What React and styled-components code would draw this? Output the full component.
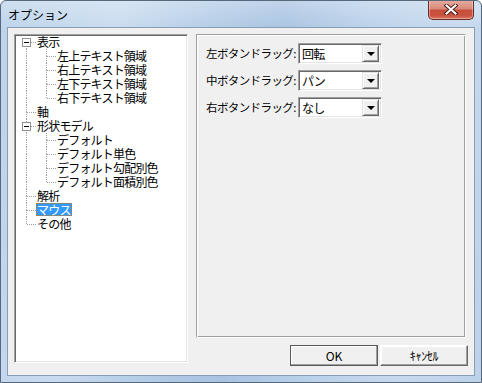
import React from 'react';
import styled, { createGlobalStyle } from 'styled-components';

const Global = createGlobalStyle`
  html, body { margin: 0; padding: 0; background: #ffffff; }
  body {
    font-family: "Noto Sans CJK JP", "Noto Sans", sans-serif;
    font-size: 12px;
    color: #000;
  }
  * { box-sizing: border-box; }
`;

const Window = styled.div`
  width: 482px;
  height: 383px;
  border: 1px solid #56687c;
  border-radius: 6px 6px 0 0;
  background:
    linear-gradient(to bottom, rgba(255,255,255,0.28), rgba(255,255,255,0) 30px),
    linear-gradient(100deg, #bcd3eb 0%, #c8dbef 22%, #b2cbe6 40%, #a8c3e2 52%, #bad1ea 68%, #c6d9ee 85%, #bcd2ea 100%);
  display: flex;
  flex-direction: column;
  overflow: hidden;
`;

const TitleBar = styled.div`
  height: 29px;
  display: flex;
  align-items: flex-start;
  padding: 0 7px 0 7px;
`;

const Title = styled.div`
  font-size: 12px;
  line-height: 14px;
  margin-top: 7px;
  color: #000;
`;

const CloseButton = styled.div`
  margin-left: auto;
  margin-top: -1px;
  width: 46px;
  height: 20px;
  border: 1px solid #6a2c26;
  border-top: none;
  border-radius: 0 0 5px 5px;
  background: linear-gradient(to bottom, #e6ada1 0%, #d98a7b 45%, #c84f3c 55%, #c9503e 80%, #d9785f 100%);
  box-shadow: inset 0 0 0 1px rgba(255,255,255,0.35);
  display: flex;
  align-items: center;
  justify-content: center;
`;

const Client = styled.div`
  flex: 1;
  margin: 0 6px 6px 6px;
  border: 1px solid #8a9db3;
  background: #f0f0f0;
  padding: 6px 8px 9px 6px;
  display: grid;
  grid-template-columns: 174px 1fr;
  column-gap: 8px;
`;

const TreeBox = styled.div`
  height: 329px;
  background: #ffffff;
  border: 1px solid;
  border-color: #a0a0a0 #ffffff #ffffff #a0a0a0;
  box-shadow: inset 1px 1px 0 #696969, inset -1px -1px 0 #e3e3e3;
  padding: 0 0 0 1px;
`;

const Row = styled.div`
  display: flex;
  height: 14px;
  align-items: flex-start;
`;

const dotV = 'repeating-linear-gradient(to bottom, #a0a0a0 0 1px, transparent 1px 2px)';
const dotH = 'repeating-linear-gradient(to right, #a0a0a0 0 1px, transparent 1px 2px)';

const Guide = styled.div`
  width: 20px;
  height: 14px;
  flex: none;
  display: flex;
  align-items: flex-start;
  background-repeat: no-repeat;
  background-image: ${p => [
    p.$up ? dotV : null,
    p.$down ? dotV : null,
    p.$branch ? dotH : null,
  ].filter(Boolean).join(', ') || 'none'};
  background-position: ${p => [
    p.$up ? '10px 0' : null,
    p.$down ? '10px 7px' : null,
    p.$branch ? '11px 7px' : null,
  ].filter(Boolean).join(', ') || '0 0'};
  background-size: ${p => [
    p.$up ? '1px 7px' : null,
    p.$down ? '1px 7px' : null,
    p.$branch ? '9px 1px' : null,
  ].filter(Boolean).join(', ') || 'auto'};
`;

const Expander = styled.span`
  width: 9px;
  height: 9px;
  margin: 3px 0 0 6px;
  border: 1px solid #919191;
  background: linear-gradient(#000, #000) center / 5px 1px no-repeat, #ffffff;
`;

const Label = styled.span`
  display: block;
  height: 13px;
  line-height: 13px;
  font-size: 12px;
  padding: 0 1px;
  white-space: nowrap;
  letter-spacing: -0.8px;
  color: ${p => (p.$selected ? '#ffffff' : '#000000')};
  background: ${p => (p.$selected ? '#3399ff' : 'transparent')};
  outline: ${p => (p.$selected ? '1px dotted #cc7a00' : 'none')};
  outline-offset: -1px;
`;

const RightCol = styled.div`
  display: flex;
  flex-direction: column;
`;

const Panel = styled.div`
  height: 304px;
  border: 1px solid;
  border-color: #a0a0a0 #ffffff #ffffff #a0a0a0;
  box-shadow: inset 1px 1px 0 #ffffff, inset -1px -1px 0 #a0a0a0;
  padding: 8px 9px;
  display: flex;
  flex-direction: column;
  gap: 6px;
`;

const FieldRow = styled.div`
  height: 21px;
  display: grid;
  grid-template-columns: 92px 84px;
  align-items: center;
`;

const FieldLabel = styled.span`
  display: block;
  line-height: 15px;
  font-size: 11.5px;
  letter-spacing: -0.6px;
  white-space: nowrap;
`;

const Combo = styled.div`
  height: 21px;
  background: #ffffff;
  border: 1px solid;
  border-color: #a0a0a0 #ffffff #ffffff #a0a0a0;
  box-shadow: inset 1px 1px 0 #696969, inset -1px -1px 0 #e3e3e3;
  display: flex;
  align-items: center;
  padding: 1px 2px 1px 3px;
`;

const ComboText = styled.span`
  flex: 1;
  line-height: 15px;
  letter-spacing: -0.8px;
`;

const DropButton = styled.span`
  width: 17px;
  height: 17px;
  background: #f0f0f0;
  border: 1px solid;
  border-color: #e3e3e3 #696969 #696969 #e3e3e3;
  box-shadow: inset 1px 1px 0 #ffffff, inset -1px -1px 0 #a0a0a0;
  display: flex;
  align-items: center;
  justify-content: center;
`;

const Arrow = styled.span`
  width: 0;
  height: 0;
  border-left: 4px solid transparent;
  border-right: 4px solid transparent;
  border-top: 4px solid #000;
  margin-top: 1px;
`;

const ButtonRow = styled.div`
  display: flex;
  justify-content: flex-end;
  gap: 2px;
  margin-top: 7px;
  margin-right: -2px;
`;

const Button = styled.div`
  width: 88px;
  height: 21px;
  background: #f0f0f0;
  border: 1px solid;
  border-color: ${p => (p.$default ? '#5a5a5a' : '#ffffff #696969 #696969 #ffffff')};
  box-shadow: inset -1px -1px 0 #a0a0a0, inset 1px 1px 0 #ffffff;
  display: flex;
  align-items: center;
  justify-content: center;
  font-size: 12px;
  line-height: 14px;
  letter-spacing: ${p => (p.$tight ? '-0.3px' : '0')};
`;

const treeData = [
  { label: '表示', children: ['左上テキスト領域', '右上テキスト領域', '左下テキスト領域', '右下テキスト領域'] },
  { label: '軸' },
  { label: '形状モデル', children: ['デフォルト', 'デフォルト単色', 'デフォルト勾配別色', 'デフォルト面積別色'] },
  { label: '解析' },
  { label: 'マウス', selected: true },
  { label: 'その他' },
];

function buildRows() {
  const rows = [];
  treeData.forEach((node, i) => {
    const first = i === 0;
    const last = i === treeData.length - 1;
    rows.push({
      key: node.label,
      label: node.label,
      selected: node.selected,
      guides: [{ up: !first, down: !last, branch: true, expander: !!node.children }],
    });
    (node.children || []).forEach((c, j) => {
      const cLast = j === node.children.length - 1;
      rows.push({
        key: node.label + c,
        label: c,
        guides: [
          { up: !last, down: !last, branch: false },
          { up: true, down: !cLast, branch: true },
        ],
      });
    });
  });
  return rows;
}

const fields = [
  { label: '左ボタンドラッグ:', value: '回転' },
  { label: '中ボタンドラッグ:', value: 'パン' },
  { label: '右ボタンドラッグ:', value: 'なし' },
];

export default function App() {
  const rows = buildRows();
  return (
    <>
      <Global />
      <Window>
        <TitleBar>
          <Title>オプション</Title>
          <CloseButton>
            <svg width="14" height="11" viewBox="0 0 14 11">
              <path d="M2.5 1.5 L11.5 9.5 M11.5 1.5 L2.5 9.5" stroke="#4a2420" strokeWidth="4" strokeLinecap="square" fill="none" />
              <path d="M2.5 1.5 L11.5 9.5 M11.5 1.5 L2.5 9.5" stroke="#ffffff" strokeWidth="2" strokeLinecap="square" fill="none" />
            </svg>
          </CloseButton>
        </TitleBar>
        <Client>
          <TreeBox>
            {rows.map(r => (
              <Row key={r.key}>
                {r.guides.map((g, gi) => (
                  <Guide key={gi} $up={g.up} $down={g.down} $branch={g.branch}>
                    {g.expander && <Expander />}
                  </Guide>
                ))}
                <Label $selected={r.selected}>{r.label}</Label>
              </Row>
            ))}
          </TreeBox>
          <RightCol>
            <Panel>
              {fields.map(f => (
                <FieldRow key={f.label}>
                  <FieldLabel>{f.label}</FieldLabel>
                  <Combo>
                    <ComboText>{f.value}</ComboText>
                    <DropButton><Arrow /></DropButton>
                  </Combo>
                </FieldRow>
              ))}
            </Panel>
            <ButtonRow>
              <Button $default>OK</Button>
              <Button $tight>ｷｬﾝｾﾙ</Button>
            </ButtonRow>
          </RightCol>
        </Client>
      </Window>
    </>
  );
}
